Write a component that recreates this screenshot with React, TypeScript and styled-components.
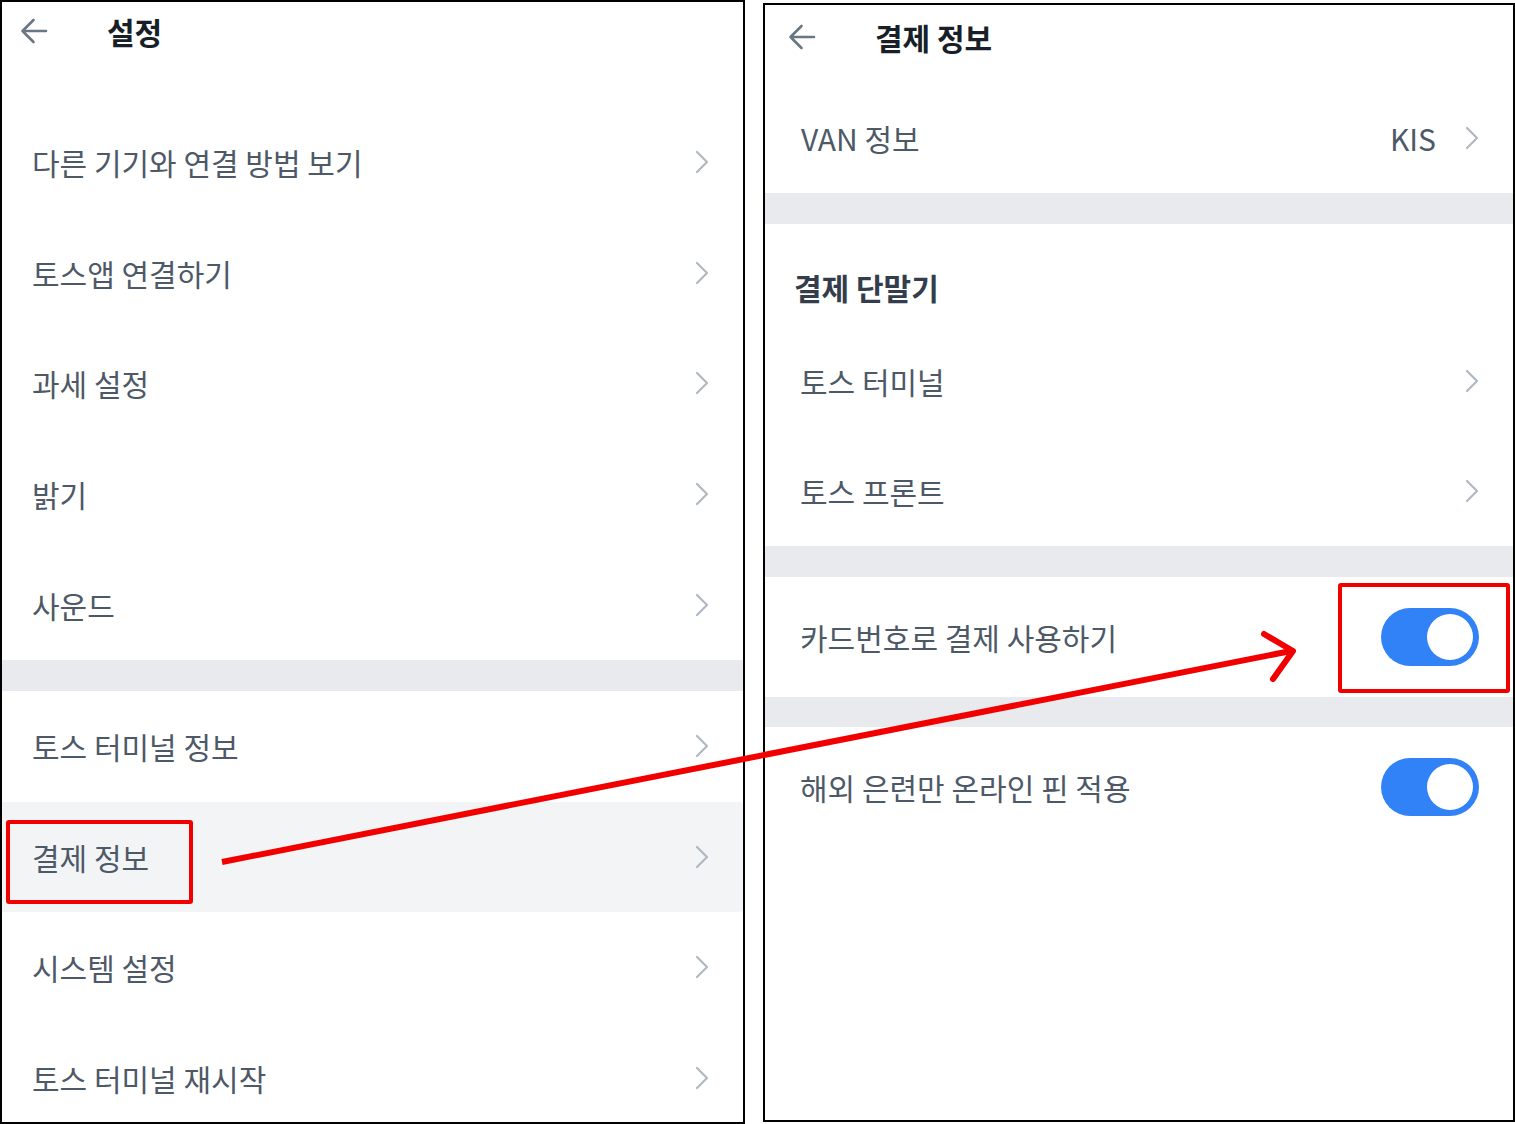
import * as React from 'react';
import styled, { createGlobalStyle } from 'styled-components';

const GlobalStyle = createGlobalStyle`
  html, body {
    margin: 0;
    padding: 0;
    background: #ffffff;
  }
  body {
    font-family: "Noto Sans CJK KR", "Noto Sans", sans-serif;
    -webkit-font-smoothing: antialiased;
  }
`;

const Page = styled.div`
  position: relative;
  display: flex;
  flex-direction: row;
  align-items: flex-start;
  gap: 18px;
  width: 1515px;
  height: 1124px;
  overflow: hidden;
`;

const Screen = styled.div<{ $width: number; $top: number; $height: number }>`
  box-sizing: border-box;
  width: ${p => p.$width}px;
  height: ${p => p.$height}px;
  margin-top: ${p => p.$top}px;
  border: 2px solid #000;
  background: #fff;
  display: flex;
  flex-direction: column;
  overflow: hidden;
`;

const Header = styled.div<{ $height: number; $barHeight: number; $inset: number }>`
  flex: 0 0 ${p => p.$height}px;
  display: flex;
  align-items: flex-start;
  padding-left: ${p => p.$inset}px;

  & > div {
    height: ${p => p.$barHeight}px;
  }
`;

const HeaderBar = styled.div`
  display: flex;
  flex-direction: row;
  align-items: center;
  gap: 59px;
`;

const Title = styled.span`
  font-size: 30px;
  font-weight: 700;
  color: #191f28;
  letter-spacing: 0;
`;

const Row = styled.div<{ $height: number; $left: number; $right: number; $active?: boolean }>`
  flex: 0 0 ${p => p.$height}px;
  display: flex;
  flex-direction: row;
  align-items: center;
  justify-content: space-between;
  padding: 0 ${p => p.$right}px 0 ${p => p.$left}px;
  background: ${p => (p.$active ? '#f2f4f6' : 'transparent')};
  border-radius: ${p => (p.$active ? '0 4px 4px 0' : '0')};
`;

const Label = styled.span`
  font-size: 30px;
  font-weight: 400;
  color: #4e5968;
  letter-spacing: 0;
`;

const Trail = styled.div`
  display: flex;
  align-items: center;
  gap: 29px;
`;

const Band = styled.div<{ $height: number }>`
  flex: 0 0 ${p => p.$height}px;
  background: #e8eaed;
`;

const SectionTitle = styled.div`
  flex: 0 0 102px;
  box-sizing: border-box;
  padding: 41px 0 0 29px;
  font-size: 30px;
  font-weight: 700;
  color: #333d4b;
  letter-spacing: 0;
`;

const Toggle = styled.div<{ $on: boolean }>`
  position: relative;
  width: 98px;
  height: 58px;
  border-radius: 29px;
  background: ${p => (p.$on ? '#3182f6' : '#e5e8eb')};

  &::after {
    content: '';
    position: absolute;
    top: 6px;
    left: ${p => (p.$on ? '46px' : '6px')};
    width: 46px;
    height: 46px;
    border-radius: 50%;
    background: #fff;
  }
`;

const Overlay = styled.svg`
  position: absolute;
  left: 0;
  top: 0;
  pointer-events: none;
`;

const BackArrow = () => (
  <svg width="28" height="26" viewBox="0 0 28 26" fill="none">
    <path
      d="M26 13H2.5M13.5 2L2.5 13l11 11"
      stroke="#6b7684"
      strokeWidth="2.6"
      strokeLinecap="round"
      strokeLinejoin="round"
    />
  </svg>
);

const Chevron = () => (
  <svg width="14" height="24" viewBox="0 0 14 24" fill="none">
    <path
      d="M2 2l10 10L2 22"
      stroke="#b0b8c1"
      strokeWidth="2.2"
      strokeLinecap="round"
      strokeLinejoin="round"
    />
  </svg>
);

const settingsTop = ['다른 기기와 연결 방법 보기', '토스앱 연결하기', '과세 설정', '밝기', '사운드'];
const settingsBottom = ['토스 터미널 정보', '결제 정보', '시스템 설정', '토스 터미널 재시작'];

const LEFT_ROW = 110.6;

export default function App() {
  return (
    <>
      <GlobalStyle />
      <Page>
        <Screen $width={745} $top={0} $height={1124}>
          <Header $height={105} $barHeight={58} $inset={18}>
            <HeaderBar>
              <BackArrow />
              <Title>설정</Title>
            </HeaderBar>
          </Header>
          {settingsTop.map(label => (
            <Row key={label} $height={LEFT_ROW} $left={30} $right={34}>
              <Label>{label}</Label>
              <Chevron />
            </Row>
          ))}
          <Band $height={31} />
          {settingsBottom.map(label => (
            <Row key={label} $height={LEFT_ROW} $left={30} $right={34} $active={label === '결제 정보'}>
              <Label>{label}</Label>
              <Chevron />
            </Row>
          ))}
        </Screen>

        <Screen $width={752} $top={3} $height={1119}>
          <Header $height={78} $barHeight={64} $inset={23}>
            <HeaderBar>
              <BackArrow />
              <Title>결제 정보</Title>
            </HeaderBar>
          </Header>
          <Row $height={110} $left={36} $right={34}>
            <Label>VAN 정보</Label>
            <Trail>
              <Label>KIS</Label>
              <Chevron />
            </Trail>
          </Row>
          <Band $height={31} />
          <SectionTitle>결제 단말기</SectionTitle>
          <Row $height={110} $left={35} $right={34}>
            <Label>토스 터미널</Label>
            <Chevron />
          </Row>
          <Row $height={110} $left={35} $right={34}>
            <Label>토스 프론트</Label>
            <Chevron />
          </Row>
          <Band $height={31} />
          <Row $height={120} $left={35} $right={34}>
            <Label>카드번호로 결제 사용하기</Label>
            <Toggle $on />
          </Row>
          <Band $height={30} />
          <Row $height={120} $left={35} $right={34}>
            <Label>해외 은련만 온라인 핀 적용</Label>
            <Toggle $on />
          </Row>
        </Screen>

        <Overlay width="1515" height="1124" viewBox="0 0 1515 1124">
          <rect x="8" y="822" width="183" height="80" fill="none" stroke="#f20000" strokeWidth="4" rx="1" />
          <rect x="1340" y="585" width="168" height="106" fill="none" stroke="#f20000" strokeWidth="4" rx="1" />
          <path
            d="M222 862L1291 651"
            stroke="#f20000"
            strokeWidth="6"
            strokeLinecap="butt"
            fill="none"
          />
          <path
            d="M1264 634L1293 651L1273 679"
            stroke="#f20000"
            strokeWidth="6"
            strokeLinecap="round"
            strokeLinejoin="round"
            fill="none"
          />
        </Overlay>
      </Page>
    </>
  );
}
